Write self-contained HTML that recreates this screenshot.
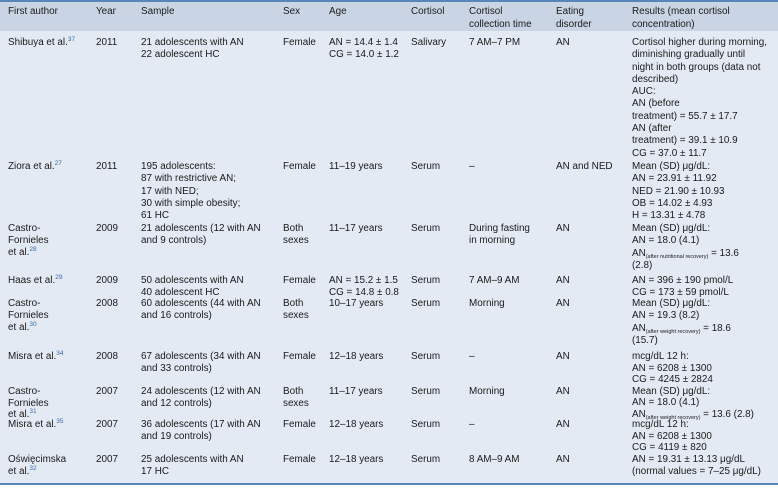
<!DOCTYPE html>
<html><head><meta charset="utf-8"><style>
body{margin:0;width:778px;height:494px;background:#fff;font-family:"Liberation Sans",sans-serif;font-size:9.9px;color:#1a1a1a;position:relative;overflow:hidden}
.hd{position:absolute;left:0;top:0;width:778px;height:31px;background:#c9d5e5;border-top:2px solid #5b84b8;box-sizing:border-box}
.bd{position:absolute;left:0;top:31px;width:778px;height:452px;background:#e4eaf4}
.bl{position:absolute;left:0;top:483px;width:778px;height:2px;background:#5b84b8}
.c{position:absolute;line-height:12px;white-space:nowrap}
sup{font-size:6.5px;color:#3a6aa8;vertical-align:4px;line-height:0}
sub{font-size:5.5px;vertical-align:-2px;line-height:0}
.s{margin-top:1px}
</style></head><body>
<div class="hd"></div><div class="bd"></div><div class="bl"></div>
<div class="c" style="left:8px;top:5px;line-height:13px">First author</div>
<div class="c" style="left:96px;top:5px;line-height:13px">Year</div>
<div class="c" style="left:141px;top:5px;line-height:13px">Sample</div>
<div class="c" style="left:283px;top:5px;line-height:13px">Sex</div>
<div class="c" style="left:329px;top:5px;line-height:13px">Age</div>
<div class="c" style="left:411px;top:5px;line-height:13px">Cortisol</div>
<div class="c" style="left:469px;top:5px;line-height:13px">Cortisol<br>collection time</div>
<div class="c" style="left:556px;top:5px;line-height:13px">Eating<br>disorder</div>
<div class="c" style="left:632px;top:5px;line-height:13px">Results (mean cortisol<br>concentration)</div>

<div class="c" style="left:8px;top:37px">Shibuya et al.<sup>37</sup></div>
<div class="c" style="left:96px;top:37px">2011</div>
<div class="c" style="left:141px;top:37px">21 adolescents with AN<br>22 adolescent HC</div>
<div class="c" style="left:283px;top:37px">Female</div>
<div class="c" style="left:329px;top:37px">AN = 14.4 ± 1.4<br>CG = 14.0 ± 1.2</div>
<div class="c" style="left:411px;top:37px">Salivary</div>
<div class="c" style="left:469px;top:37px">7 AM–7 PM</div>
<div class="c" style="left:556px;top:37px">AN</div>
<div class="c" style="left:632px;top:37px;line-height:12.3px">Cortisol higher during morning,<br>diminishing gradually until<br>night in both groups (data not<br>described)<br>AUC:<br>AN (before<br>treatment) = 55.7 ± 17.7<br>AN (after<br>treatment) = 39.1 ± 10.9<br>CG = 37.0 ± 11.7</div>

<div class="c" style="left:8px;top:161px">Ziora et al.<sup>27</sup></div>
<div class="c" style="left:96px;top:161px">2011</div>
<div class="c" style="left:141px;top:161px;line-height:12.3px">195 adolescents:<br>87 with restrictive AN;<br>17 with NED;<br>30 with simple obesity;<br>61 HC</div>
<div class="c" style="left:283px;top:161px">Female</div>
<div class="c" style="left:329px;top:161px">11–19 years</div>
<div class="c" style="left:411px;top:161px">Serum</div>
<div class="c" style="left:469px;top:161px">–</div>
<div class="c" style="left:556px;top:161px">AN and NED</div>
<div class="c" style="left:632px;top:161px;line-height:12.3px">Mean (SD) μg/dL:<br>AN = 23.91 ± 11.92<br>NED = 21.90 ± 10.93<br>OB = 14.02 ± 4.93<br>H = 13.31 ± 4.78</div>

<div class="c" style="left:8px;top:223px">Castro-<br>Fornieles<br>et al.<sup>28</sup></div>
<div class="c" style="left:96px;top:223px">2009</div>
<div class="c" style="left:141px;top:223px">21 adolescents (12 with AN<br>and 9 controls)</div>
<div class="c" style="left:283px;top:223px">Both<br>sexes</div>
<div class="c" style="left:329px;top:223px">11–17 years</div>
<div class="c" style="left:411px;top:223px">Serum</div>
<div class="c" style="left:469px;top:223px">During fasting<br>in morning</div>
<div class="c" style="left:556px;top:223px">AN</div>
<div class="c" style="left:632px;top:223px">Mean (SD) μg/dL:<br>AN = 18.0 (4.1)<br><div class="s">AN<sub>(after nutritional recovery)</sub> = 13.6</div>(2.8)</div>

<div class="c" style="left:8px;top:275px">Haas et al.<sup>29</sup></div>
<div class="c" style="left:96px;top:275px">2009</div>
<div class="c" style="left:141px;top:275px">50 adolescents with AN<br>40 adolescent HC</div>
<div class="c" style="left:283px;top:275px">Female</div>
<div class="c" style="left:329px;top:275px">AN = 15.2 ± 1.5<br>CG = 14.8 ± 0.8</div>
<div class="c" style="left:411px;top:275px">Serum</div>
<div class="c" style="left:469px;top:275px">7 AM–9 AM</div>
<div class="c" style="left:556px;top:275px">AN</div>
<div class="c" style="left:632px;top:275px">AN = 396 ± 190 pmol/L<br>CG = 173 ± 59 pmol/L</div>

<div class="c" style="left:8px;top:298px">Castro-<br>Fornieles<br>et al.<sup>30</sup></div>
<div class="c" style="left:96px;top:298px">2008</div>
<div class="c" style="left:141px;top:298px">60 adolescents (44 with AN<br>and 16 controls)</div>
<div class="c" style="left:283px;top:298px">Both<br>sexes</div>
<div class="c" style="left:329px;top:298px">10–17 years</div>
<div class="c" style="left:411px;top:298px">Serum</div>
<div class="c" style="left:469px;top:298px">Morning</div>
<div class="c" style="left:556px;top:298px">AN</div>
<div class="c" style="left:632px;top:298px">Mean (SD) μg/dL:<br>AN = 19.3 (8.2)<br><div class="s">AN<sub>(after weight recovery)</sub> = 18.6</div>(15.7)</div>

<div class="c" style="left:8px;top:351px">Misra et al.<sup>34</sup></div>
<div class="c" style="left:96px;top:351px">2008</div>
<div class="c" style="left:141px;top:351px">67 adolescents (34 with AN<br>and 33 controls)</div>
<div class="c" style="left:283px;top:351px">Female</div>
<div class="c" style="left:329px;top:351px">12–18 years</div>
<div class="c" style="left:411px;top:351px">Serum</div>
<div class="c" style="left:469px;top:351px">–</div>
<div class="c" style="left:556px;top:351px">AN</div>
<div class="c" style="left:632px;top:351px;line-height:11.6px">mcg/dL 12 h:<br>AN = 6208 ± 1300<br>CG = 4245 ± 2824</div>

<div class="c" style="left:8px;top:386px;line-height:11.5px">Castro-<br>Fornieles<br>et al.<sup>31</sup></div>
<div class="c" style="left:96px;top:386px">2007</div>
<div class="c" style="left:141px;top:386px">24 adolescents (12 with AN<br>and 12 controls)</div>
<div class="c" style="left:283px;top:386px">Both<br>sexes</div>
<div class="c" style="left:329px;top:386px">11–17 years</div>
<div class="c" style="left:411px;top:386px">Serum</div>
<div class="c" style="left:469px;top:386px">Morning</div>
<div class="c" style="left:556px;top:386px">AN</div>
<div class="c" style="left:632px;top:386px;line-height:11.3px">Mean (SD) μg/dL:<br>AN = 18.0 (4.1)<br>AN<sub>(after weight recovery)</sub> = 13.6 (2.8)</div>

<div class="c" style="left:8px;top:419px">Misra et al.<sup>35</sup></div>
<div class="c" style="left:96px;top:419px">2007</div>
<div class="c" style="left:141px;top:419px">36 adolescents (17 with AN<br>and 19 controls)</div>
<div class="c" style="left:283px;top:419px">Female</div>
<div class="c" style="left:329px;top:419px">12–18 years</div>
<div class="c" style="left:411px;top:419px">Serum</div>
<div class="c" style="left:469px;top:419px">–</div>
<div class="c" style="left:556px;top:419px">AN</div>
<div class="c" style="left:632px;top:419px;line-height:11.5px">mcg/dL 12 h:<br>AN = 6208 ± 1300<br>CG = 4119 ± 820</div>

<div class="c" style="left:8px;top:454px">Oświęcimska<br>et al.<sup>32</sup></div>
<div class="c" style="left:96px;top:454px">2007</div>
<div class="c" style="left:141px;top:454px">25 adolescents with AN<br>17 HC</div>
<div class="c" style="left:283px;top:454px">Female</div>
<div class="c" style="left:329px;top:454px">12–18 years</div>
<div class="c" style="left:411px;top:454px">Serum</div>
<div class="c" style="left:469px;top:454px">8 AM–9 AM</div>
<div class="c" style="left:556px;top:454px">AN</div>
<div class="c" style="left:632px;top:454px">AN = 19.31 ± 13.13 μg/dL<br>(normal values = 7–25 μg/dL)</div>
</body></html>
